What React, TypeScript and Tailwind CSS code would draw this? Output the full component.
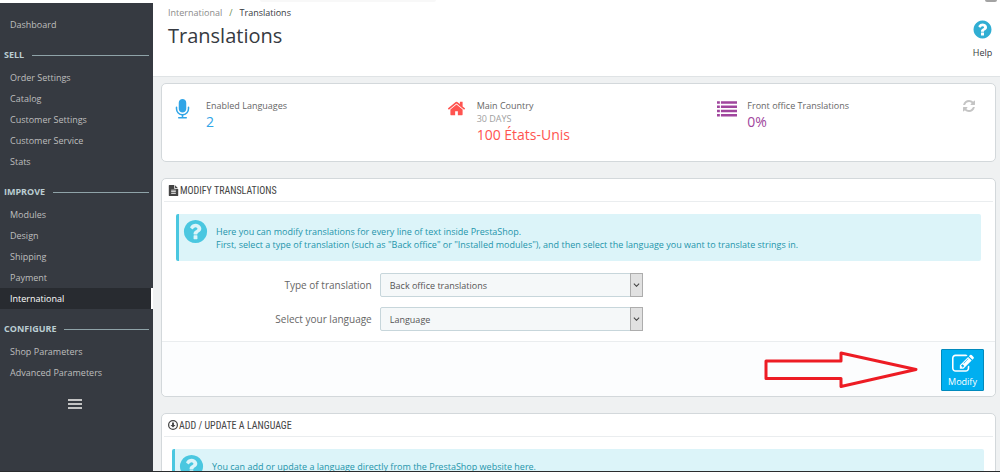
import type { ReactNode } from 'react'
import clsx from 'clsx'

const PATHS = {
    microphone:
        'M1472 704v128q0 221-147.5 384.5t-364.5 187.5v132h256q26 0 45 19t19 45-19 45-45 19h-640q-26 0-45-19t-19-45 19-45 45-19h256v-132q-217-24-364.5-187.5t-147.5-384.5v-128q0-26 19-45t45-19 45 19 19 45v128q0 185 131.5 316.5t316.5 131.5 316.5-131.5 131.5-316.5v-128q0-26 19-45t45-19 45 19 19 45zm-256-384v512q0 132-94 226t-226 94-226-94-94-226v-512q0-132 94-226t226-94 226 94 94 226z',
    home: 'M1472 992v480q0 26-19 45t-45 19h-384v-384h-256v384h-384q-26 0-45-19t-19-45v-480q0-1 .5-3t.5-3l575-474 575 474q1 2 1 6zm223-69l-62 74q-8 9-21 11h-3q-13 0-21-7l-692-577-692 577q-12 8-24 7-13-2-21-11l-62-74q-8-10-7-23.5t11-21.5l719-599q32-26 76-26t76 26l244 204v-195q0-14 9-23t23-9h192q14 0 23 9t9 23v408l219 182q10 8 11 21.5t-7 23.5z',
    list: 'M0 192h256v224h-256zM352 192h1440v224h-1440zM0 576h256v224h-256zM352 576h1440v224h-1440zM0 960h256v224h-256zM352 960h1440v224h-1440zM0 1344h256v224h-256zM352 1344h1440v224h-1440z',
    question:
        'M1024 1376v-192q0-14-9-23t-23-9h-192q-14 0-23 9t-9 23v192q0 14 9 23t23 9h192q14 0 23-9t9-23zm256-672q0-88-55.5-163t-138.5-116-170-41q-243 0-371 213-15 24 8 42l132 100q7 6 19 6 16 0 25-12 53-68 86-92 34-24 86-24 48 0 85.5 26t37.5 59q0 38-20 61t-68 45q-63 28-115.5 86.5t-52.5 125.5v36q0 14 9 23t23 9h192q14 0 23-9t9-23q0-19 21.5-49.5t54.5-49.5q32-18 49-28.5t46-35 44.5-48 28-60.5 12.5-81zm384 192q0 209-103 385.5t-279.5 279.5-385.5 103-385.5-103-279.5-279.5-103-385.5 103-385.5 279.5-279.5 385.5-103 385.5 103 279.5 279.5 103 385.5z',
    refresh:
        'M1639 1056q0 5-1 7-64 268-268 434.5t-478 166.5q-146 0-282.5-55t-243.5-157l-129 129q-19 19-45 19t-45-19-19-45v-448q0-26 19-45t45-19h448q26 0 45 19t19 45-19 45l-137 137q71 66 161 102t187 36q134 0 250-65t186-179q11-17 53-117 8-23 30-23h192q13 0 22.5 9.5t9.5 22.5zm25-800v448q0 26-19 45t-45 19h-448q-26 0-45-19t-19-45 19-45l138-138q-148-137-349-137-134 0-250 65t-186 179q-11 17-53 117-8 23-30 23h-199q-13 0-22.5-9.5t-9.5-22.5v-7q65-268 270-434.5t480-166.5q146 0 284 55.5t245 156.5l130-129q19-19 45-19t45 19 19 45z',
    edit: 'M888 1184l116-116-152-152-116 116v56h96v96h56zm440-720q-16-16-33 1l-350 350q-17 17-1 33t33-1l350-350q17-17 1-33zm80 594v190q0 119-84.5 203.5t-203.5 84.5h-832q-119 0-203.5-84.5t-84.5-203.5v-832q0-119 84.5-203.5t203.5-84.5h832q63 0 117 25 15 7 18 23 3 17-9 29l-49 49q-14 14-32 8-23-6-45-6h-832q-66 0-113 47t-47 113v832q0 66 47 113t113 47h832q66 0 113-47t47-113v-126q0-13 9-22l64-64q15-15 35-7t20 29zm-96-738l288 288-672 672h-288v-288zm444 132l-92 92-288-288 92-92q28-28 68-28t68 28l152 152q28 28 28 68t-28 68z',
    file: 'M1596 476q14 14 28 36h-472v-472q22 14 36 28zm-476 164h544v1056q0 40-28 68t-68 28h-1344q-40 0-68-28t-28-68v-1600q0-40 28-68t68-28h800v544q0 40 28 68t68 28zm160 736v-64q0-14-9-23t-23-9h-704q-14 0-23 9t-9 23v64q0 14 9 23t23 9h704q14 0 23-9t9-23zm0-256v-64q0-14-9-23t-23-9h-704q-14 0-23 9t-9 23v64q0 14 9 23t23 9h704q14 0 23-9t9-23zm0-256v-64q0-14-9-23t-23-9h-704q-14 0-23 9t-9 23v64q0 14 9 23t23 9h704q14 0 23-9t9-23z',
}

function Icon({ name, className }: { name: keyof typeof PATHS; className?: string }) {
    return (
        <svg viewBox="0 0 1792 1792" fill="currentColor" aria-hidden="true" className={clsx('shrink-0', className)}>
            <path d={PATHS[name]} />
        </svg>
    )
}

const menu = [
    { title: 'Sell', items: ['Order Settings', 'Catalog', 'Customer Settings', 'Customer Service', 'Stats'] },
    { title: 'Improve', items: ['Modules', 'Design', 'Shipping', 'Payment', 'International'] },
    { title: 'Configure', items: ['Shop Parameters', 'Advanced Parameters'] },
]

function MenuLink({ label }: { label: string }) {
    const active = label === 'International'
    return (
        <a
            href="#"
            className={clsx(
                'block h-[21px] pl-[10px] text-[9px] leading-[21px]',
                active ? 'border-r-2 border-white bg-[#282b30] text-white' : 'text-[#bebebe]'
            )}
        >
            {label}
        </a>
    )
}

function Sidebar() {
    return (
        <nav className="mt-[3px] w-[153px] shrink-0 bg-[#363a41] pt-[11px]">
            <MenuLink label="Dashboard" />
            {menu.map((group) => (
                <div key={group.title}>
                    <div className="flex items-center gap-2 pt-[10px] pr-1 pb-[2px] pl-1">
                        <h2 className="text-[9px] leading-5 font-bold text-[#bbcdd2] uppercase">{group.title}</h2>
                        <span className="h-px flex-1 bg-[#8fa3a8]" />
                    </div>
                    {group.items.map((item) => (
                        <MenuLink key={item} label={item} />
                    ))}
                </div>
            ))}
            <div className="flex justify-center pt-4 pr-1">
                <button type="button" aria-label="Collapse menu" className="flex w-[14px] flex-col gap-[2px]">
                    <span className="h-[2px] w-full bg-[#c4c4c4]" />
                    <span className="h-[2px] w-full bg-[#c4c4c4]" />
                    <span className="h-[2px] w-full bg-[#c4c4c4]" />
                </button>
            </div>
        </nav>
    )
}

function Panel({ icon, title, children }: { icon: ReactNode; title: string; children: ReactNode }) {
    return (
        <section className="rounded-[5px] border border-[#d3d8db] bg-white">
            <h3 className="mx-[2px] flex h-[23px] items-center gap-px border-b border-[#eaedef] px-1 font-['Ubuntu_Condensed','Roboto_Condensed','Liberation_Sans_Narrow','Open_Sans',sans-serif] text-[10px] text-[#444] uppercase">
                {icon}
                {title}
            </h3>
            {children}
        </section>
    )
}

function Alert({ className, children }: { className?: string; children: ReactNode }) {
    return (
        <div
            className={clsx(
                'mt-3 flex h-[47px] gap-[7px] rounded-[2px] border-l-3 border-[#4ac7e0] bg-[#dcf4f9] pl-[3px] text-[#1e94ab]',
                className
            )}
        >
            <Icon name="question" className="mt-1 size-[27px] text-[#4ac7e0]" />
            <p className="pt-[11px] text-[9px] leading-[13px]">{children}</p>
        </div>
    )
}

function SelectRow({ id, label, value }: { id: string; label: string; value: string }) {
    return (
        <div className="flex items-center gap-2 pl-[2px]">
            <label htmlFor={id} className="w-1/4 text-right text-[10px] text-[#666]">
                {label}
            </label>
            <div className="relative flex w-[263px]">
                <select
                    id={id}
                    className="h-6 w-full appearance-none rounded-[2px] border border-[#c7d6db] bg-[#f5f8f9] pt-[2px] pl-[9px] text-[9px] text-[#555]"
                >
                    <option>{value}</option>
                </select>
                <span className="pointer-events-none absolute inset-y-0 right-0 flex w-[13px] items-center justify-center border border-[#adadad] bg-[#e1e1e1]">
                    <svg viewBox="0 0 8 5" className="w-[7px]" fill="none" stroke="#444" strokeWidth="1.2">
                        <path d="M1 .8l3 3 3-3" />
                    </svg>
                </span>
            </div>
        </div>
    )
}

function Kpi({ icon, label, note, value, className }: { icon: ReactNode; label: string; note?: string; value: string; className: string }) {
    return (
        <div className={clsx('flex', className)}>
            <div className="w-[30px] shrink-0">{icon}</div>
            <div>
                <div className="text-[9px] leading-[13px] text-[#666]">{label}</div>
                {note && <div className="text-[9px] leading-[13px] text-[#a0a0a0]">{note}</div>}
                <div className="text-[14px] leading-[19px]">{value}</div>
            </div>
        </div>
    )
}

export default function App() {
    return (
        <div className="relative flex h-screen overflow-hidden bg-white font-['Open_Sans',sans-serif]">
            <Sidebar />
            <div className="min-w-0 flex-1 bg-[#eff1f2]">
                <header className="flex h-[77px] justify-between border-b border-[#dfe3e5] bg-white pr-[7px] pl-[15px]">
                    <div>
                        <nav className="flex gap-[7px] pt-[6px] text-[9px] leading-[14px]">
                            <a href="#" className="text-[#8a8a8a]">International</a>
                            <span className="text-[#6b8e4e]">/</span>
                            <span className="text-[#363a41]">Translations</span>
                        </nav>
                        <h1 className="text-[20px] leading-8 text-[#363a41]">Translations</h1>
                    </div>
                    <a href="#" className="flex flex-col items-center pt-[19px] text-[9px] leading-[14px] text-[#363a41]">
                        <Icon name="question" className="mb-[6px] size-[21px] text-[#30aed3]" />
                        Help
                    </a>
                </header>

                <main className="flex flex-col gap-4 pt-[6px] pr-1 pl-2">
                    <section className="grid h-[79px] grid-cols-3 rounded-[5px] border border-[#d3d8db] bg-white pt-[15px] pr-[7px] pl-[14px]">
                        <Kpi
                            className="text-[#30a5e7]"
                            icon={<Icon name="microphone" className="-ml-1 size-[21px]" />}
                            label="Enabled Languages"
                            value="2"
                        />
                        <Kpi
                            className="text-[#ff5450]"
                            icon={<Icon name="home" className="size-[19px]" />}
                            label="Main Country"
                            note="30 DAYS"
                            value="100 États-Unis"
                        />
                        <div className="flex justify-between pr-3">
                            <Kpi
                                className="text-[#a0459d]"
                                icon={<Icon name="list" className="size-5" />}
                                label="Front office Translations"
                                value="0%"
                            />
                            <button type="button" aria-label="Refresh" className="self-start text-[#c4c4c4]">
                                <Icon name="refresh" className="size-[14px]" />
                            </button>
                        </div>
                    </section>

                    <Panel icon={<Icon name="file" className="size-[11px]" />} title="Modify translations">
                        <Alert className="mr-[14px] ml-[14px]">
                            Here you can modify translations for every line of text inside PrestaShop.
                            <br />
                            First, select a type of translation (such as "Back office" or "Installed modules"), and then select the
                            language you want to translate strings in.
                        </Alert>
                        <div className="flex flex-col gap-[10px] pt-3 pb-[10px]">
                            <SelectRow id="type" label="Type of translation" value="Back office translations" />
                            <SelectRow id="language" label="Select your language" value="Language" />
                        </div>
                        <div className="flex h-[55px] items-center justify-end gap-[23px] rounded-b-[5px] border-t border-[#eaedef] bg-[#fcfdfe] pt-[2px] pr-[11px]">
                            <svg viewBox="0 0 154 38" className="h-[38px] w-[154px]" fill="none" stroke="#ed1c24" strokeWidth="3">
                                <path d="M2 10H77V2L152 18.500L77 35.500V27.500H2z" strokeLinejoin="round" />
                            </svg>
                            <button
                                type="button"
                                className="flex h-[42px] w-[43px] flex-col items-center rounded-[1px] border border-[#008abd] bg-[#00aff0] pt-[3px] text-[9px] leading-[14px] text-white"
                            >
                                <Icon name="edit" className="size-[22px]" />
                                Modify
                            </button>
                        </div>
                    </Panel>

                    <Panel
                        icon={
                            <svg viewBox="0 0 16 16" className="size-[10px]" fill="none" stroke="currentColor" strokeWidth="2">
                                <circle cx="8" cy="8" r="7" />
                                <path d="M6.500 4h3v4h2.500L8 12 4 8h2.500z" fill="currentColor" stroke="none" />
                            </svg>
                        }
                        title="Add / Update a language"
                    >
                        <Alert className="mr-[11px] ml-[10px]">
                            You can add or update a language directly from the PrestaShop website here.
                        </Alert>
                    </Panel>
                </main>
            </div>
            {/* lower rim of the avatar and of the search field in the bar above */}
            <div className="absolute top-0 right-[3px] h-[2px] w-3 rounded-b-full bg-[#a3a3a3]" />
            <div className="absolute top-0 left-[260px] h-[2px] w-[176px] rounded-b-sm bg-[#f8f8f8]" />
            {/* bottom edge of the window */}
            <div className="pointer-events-none absolute inset-x-0 bottom-0 h-px bg-[#2a2c2e]" />
        </div>
    )
}
